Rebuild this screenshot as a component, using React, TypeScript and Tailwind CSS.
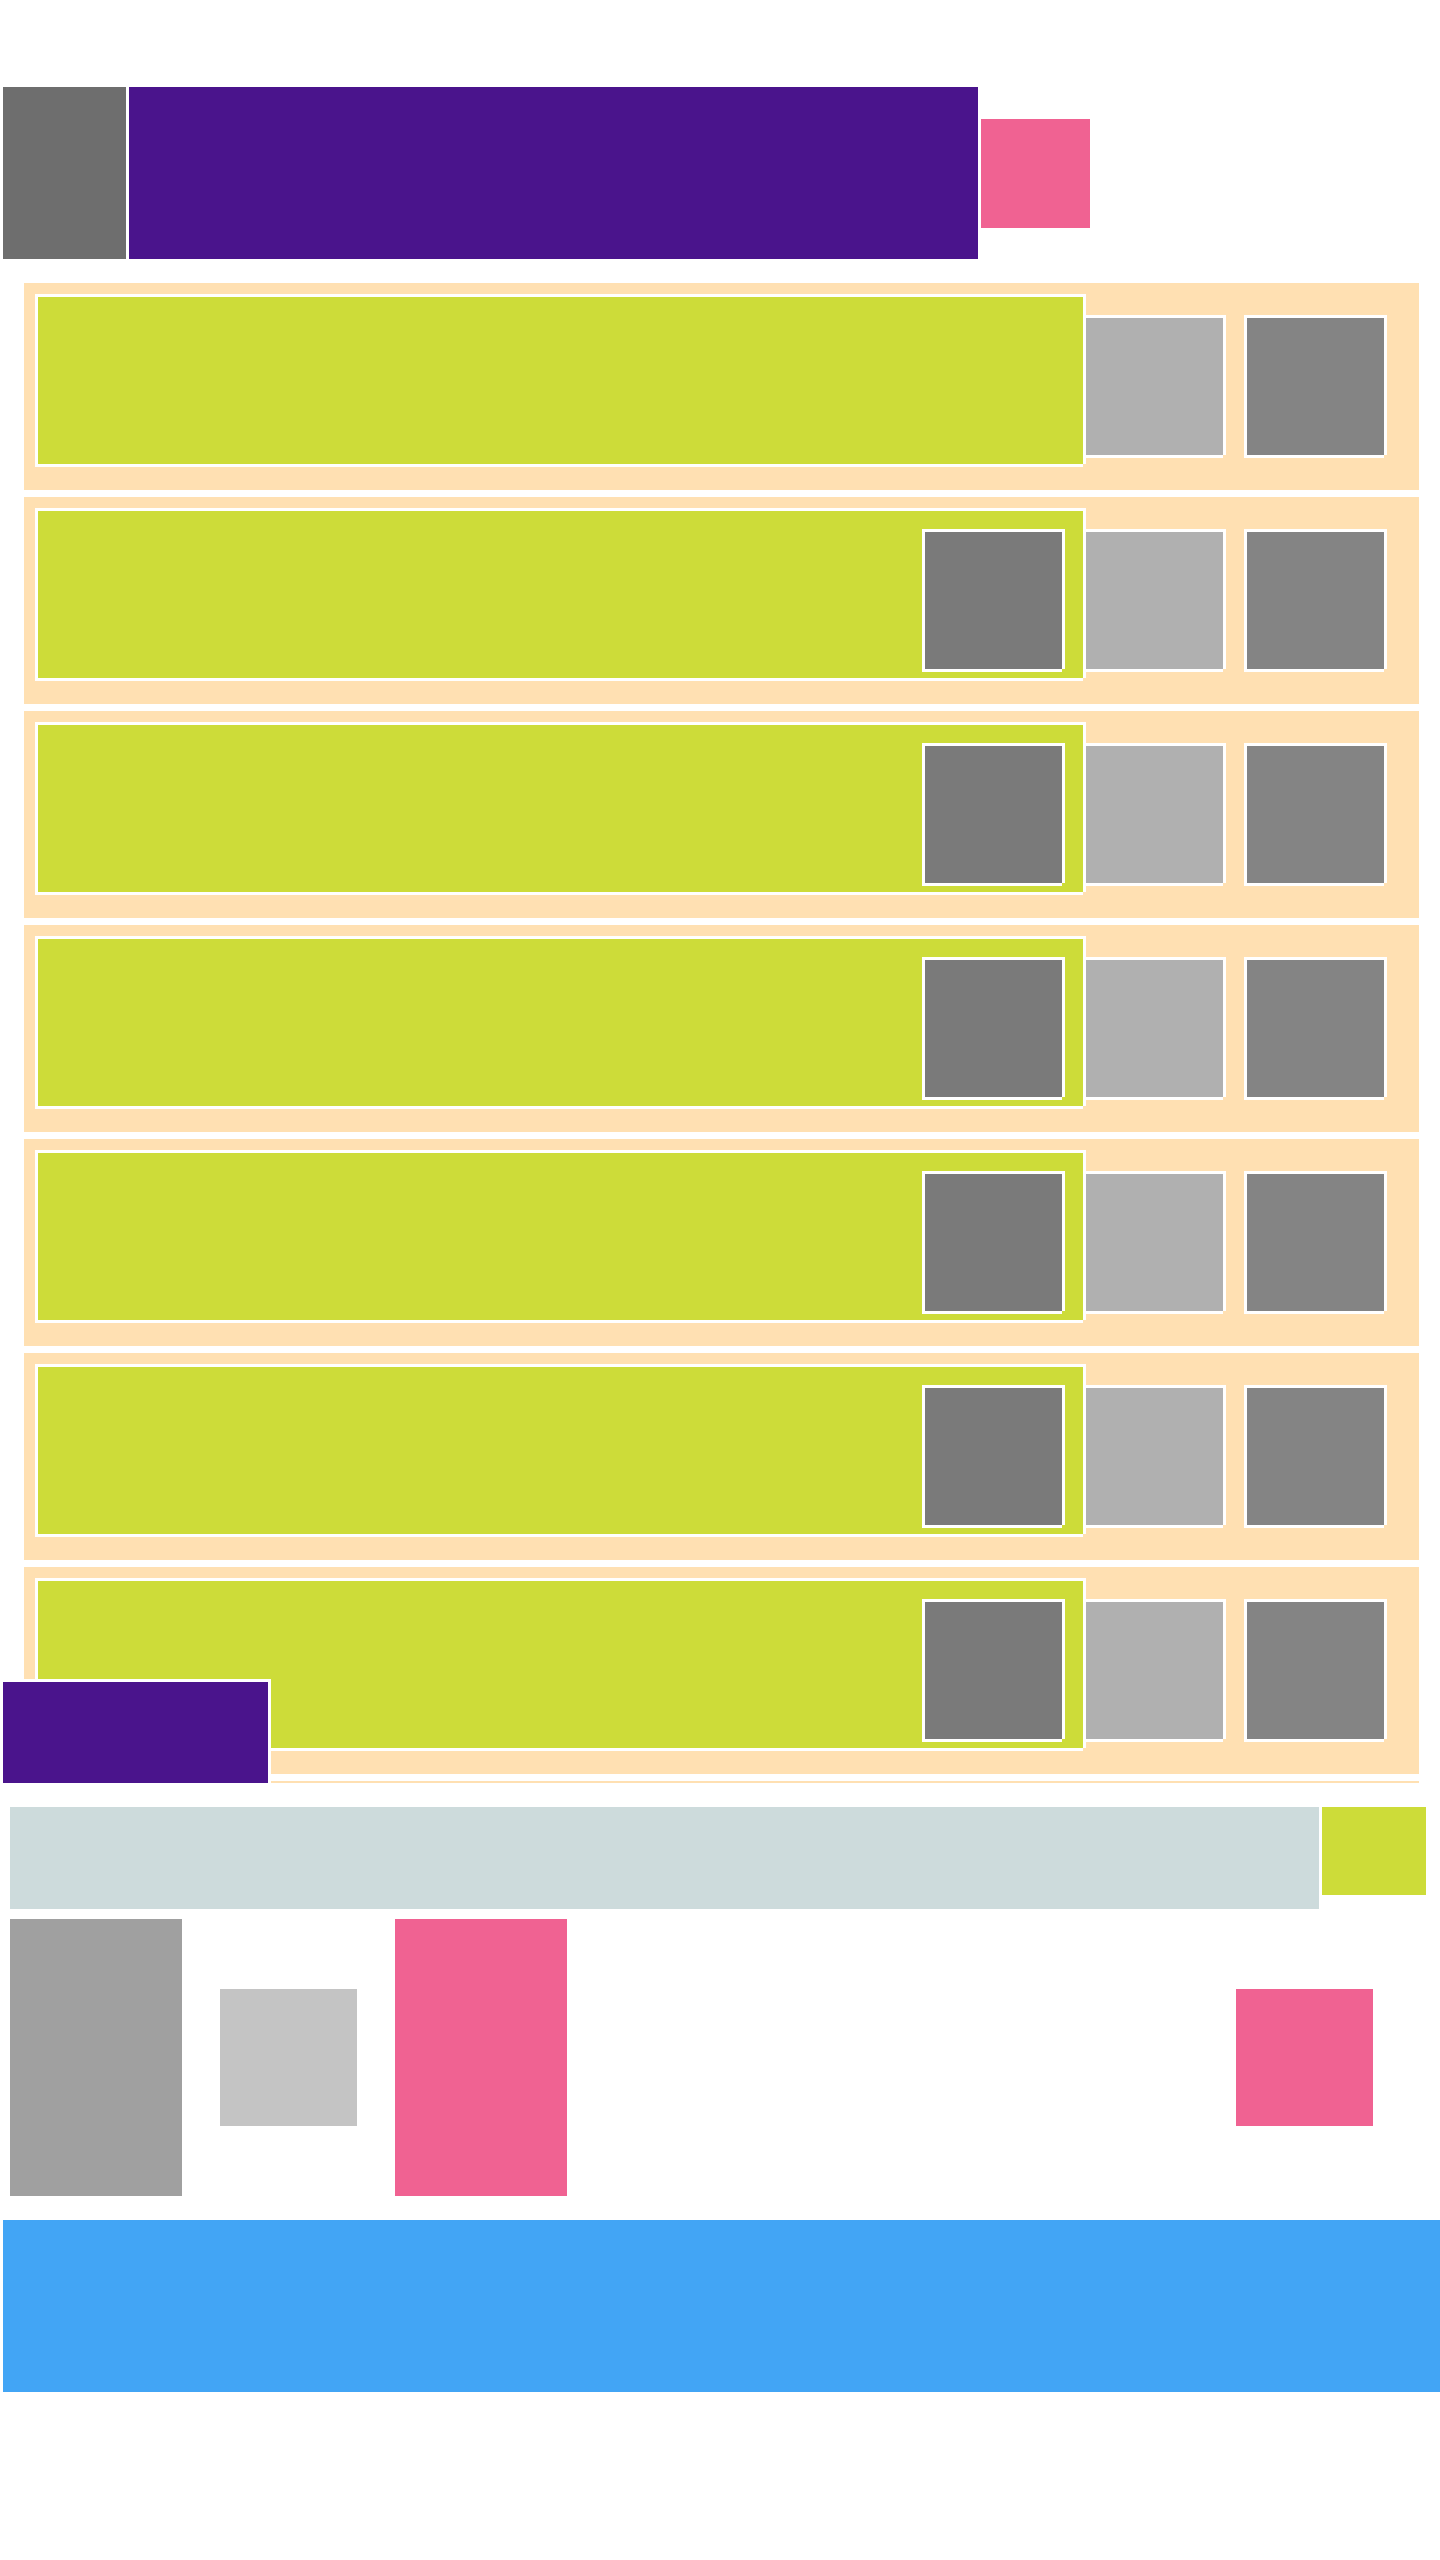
const outline =
  'shadow-[-3px_-3px_#fff,3px_-3px_#fff,-3px_3px_#fff,3px_0_#fff,0_3px_#fff]';

const rows = [
  { id: 1, movable: false },
  { id: 2, movable: true },
  { id: 3, movable: true },
  { id: 4, movable: true },
  { id: 5, movable: true },
  { id: 6, movable: true },
  { id: 7, movable: true },
  { id: 8, movable: true },
];

function Row({ id, movable }: { id: number; movable: boolean }) {
  return (
    <li className="relative shrink-0 bg-[#ffe0b2] pt-3.5 pr-[336px] pb-[26px] pl-3.5">
      <div className={`h-[167px] bg-[#cddc39] ${outline}`} />
      <div className="absolute top-[35px] right-[35px] flex gap-6">
        {movable && (
          <button
            type="button"
            aria-label={`Move item ${id}`}
            className={`size-[137px] bg-[#7a7a7a] ${outline}`}
          />
        )}
        <button
          type="button"
          aria-label={`Edit item ${id}`}
          className={`size-[137px] bg-[#b0b0b0] ${outline}`}
        />
        <button
          type="button"
          aria-label={`Remove item ${id}`}
          className={`size-[137px] bg-[#848484] ${outline}`}
        />
      </div>
    </li>
  );
}

export default function App() {
  return (
    <div className="flex min-h-screen flex-col gap-6 bg-white pt-[87px]">
      <header className="flex items-center gap-[3px] pr-[350px] pl-[3px]">
        <button type="button" aria-label="Back" className="h-[172px] w-[123px] bg-[#6e6e6e]" />
        <div className="h-[172px] flex-1 bg-[#4a148c]" />
        <button type="button" aria-label="Options" className="size-[109px] bg-[#f06292]" />
      </header>

      <main className="relative">
        <ul className="flex h-[1500px] flex-col gap-[7px] overflow-hidden pr-[21px] pl-6">
          {rows.map((row) => (
            <Row key={row.id} id={row.id} movable={row.movable} />
          ))}
        </ul>
        <div className="absolute bottom-0 left-0 h-[104px] w-[271px] border-t-[3px] border-r-[3px] border-l-[3px] border-white bg-[#4a148c]" />
      </main>

      <form className="flex flex-col gap-2.5 pl-2.5" onSubmit={(e) => e.preventDefault()}>
        <div className="flex items-start gap-[3px] pr-3.5">
          <input type="text" aria-label="Message" className="h-[102px] min-w-0 flex-1 bg-[#cddbdc]" />
          <button type="button" aria-label="Clear" className="h-[88px] w-[104px] bg-[#cddc39]" />
        </div>
        <div className="flex items-center gap-[38px] pr-[67px]">
          <button type="button" aria-label="Attach" className="h-[277px] w-[172px] bg-[#a0a0a0]" />
          <button type="button" aria-label="Camera" className="size-[137px] bg-[#c4c4c4]" />
          <button type="button" aria-label="Record" className="h-[277px] w-[172px] bg-[#f06292]" />
          <button type="submit" aria-label="Send" className="ml-auto size-[137px] bg-[#f06292]" />
        </div>
      </form>

      <footer className="pl-[3px]">
        <div className="h-[172px] bg-[#42a5f5]" />
      </footer>
    </div>
  );
}
